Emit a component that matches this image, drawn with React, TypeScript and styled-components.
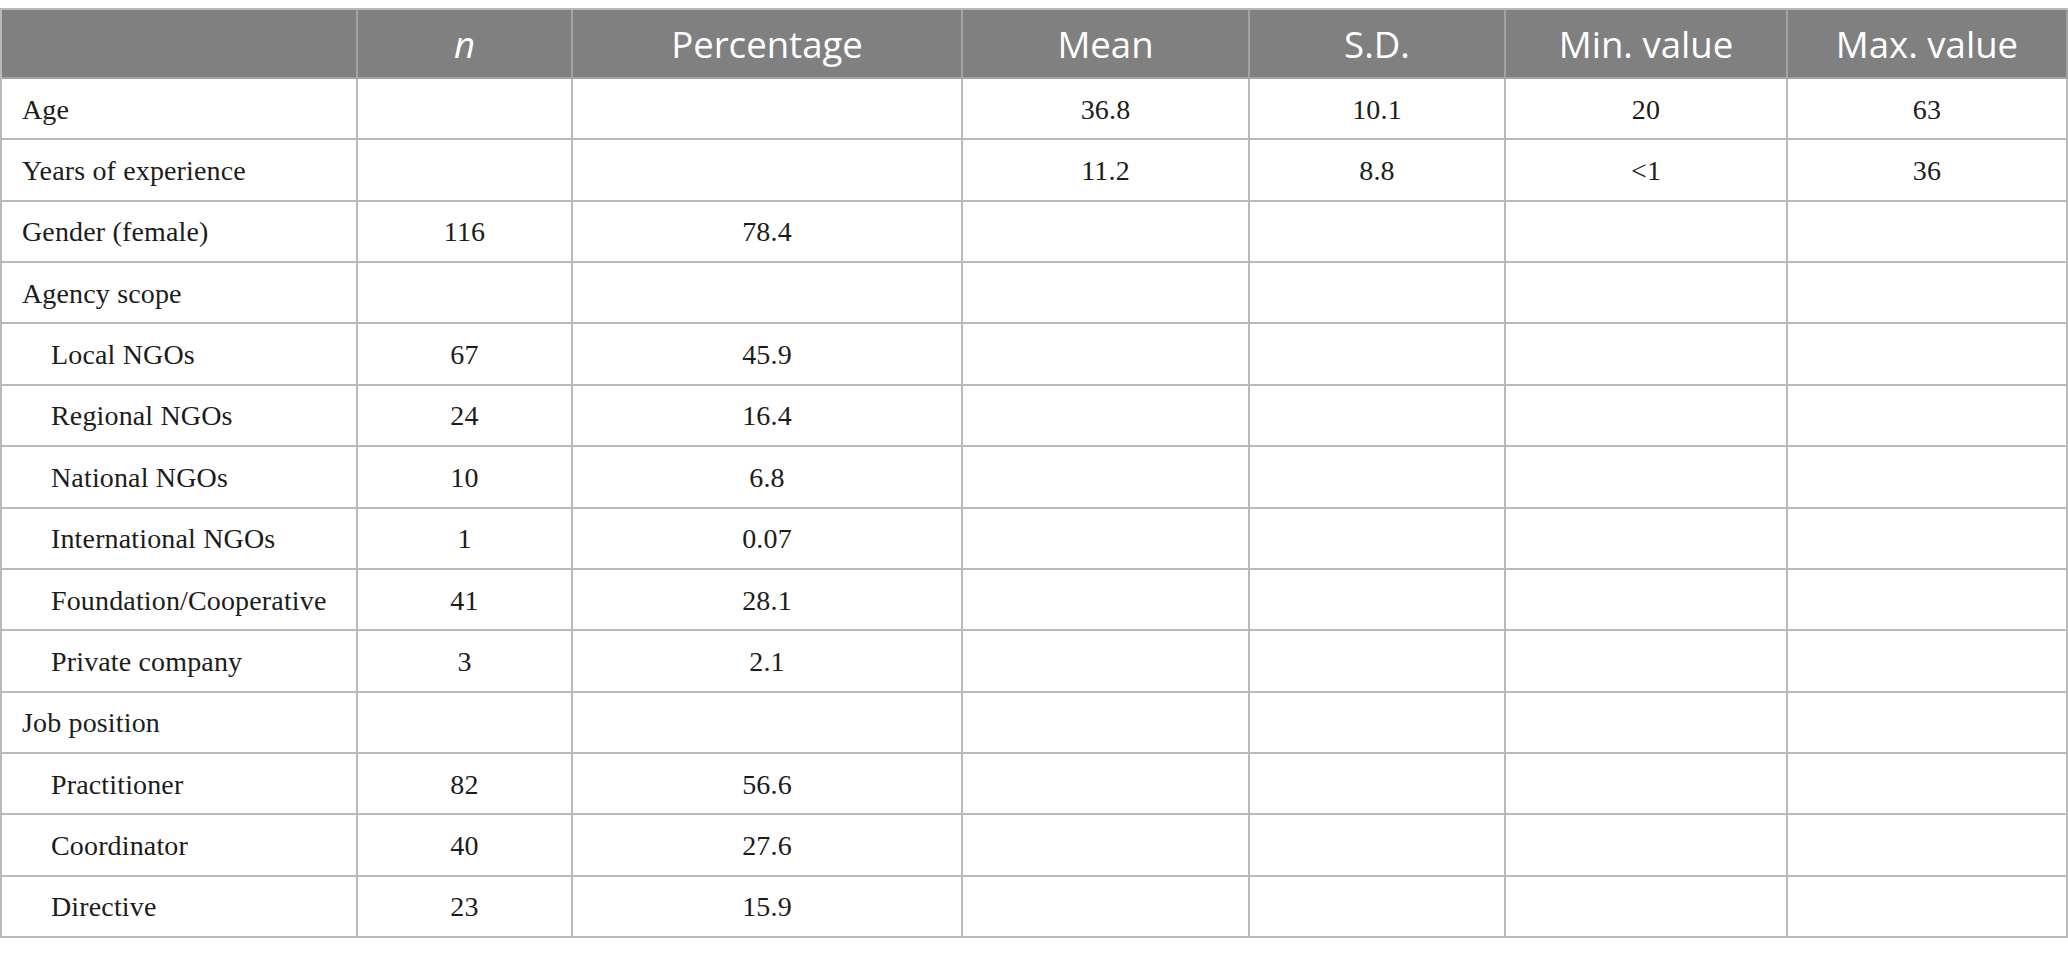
import React from "react";
import styled, { createGlobalStyle } from "styled-components";

const Global = createGlobalStyle`
  html, body { margin: 0; padding: 0; background: #ffffff; }
  body { padding-top: 8px; }
`;

const Grid = styled.div`
  display: grid;
  width: 2068px;
  box-sizing: border-box;
  grid-template-columns: 356px 215px 390px 287px 256px 282px 1fr;
  grid-template-rows: 69px repeat(14, 61.36px);
  border-top: 2px solid #b9b9b9;
  border-left: 2px solid #b9b9b9;
`;

const HeadCell = styled.div<{ $italic?: boolean }>`
  box-sizing: border-box;
  background: #7f807f;
  color: #ffffff;
  font-family: "Open Sans", "DejaVu Sans", sans-serif;
  font-size: 36.6px;
  font-style: ${(p) => (p.$italic ? "italic" : "normal")};
  display: flex;
  align-items: center;
  justify-content: center;
  border-right: 2px solid #a3a3a3;
  border-bottom: 2px solid #a3a3a3;
  padding-top: 1px;
`;

const Cell = styled.div<{ $indent?: number; $center?: boolean }>`
  box-sizing: border-box;
  font-family: "Liberation Serif", "Times New Roman", serif;
  font-size: 28px;
  letter-spacing: 0.15px;
  color: #1c1c1c;
  display: flex;
  align-items: center;
  justify-content: ${(p) => (p.$center ? "center" : "flex-start")};
  padding-left: ${(p) => (p.$center ? 0 : p.$indent ?? 20)}px;
  padding-top: 2px;
  border-right: 2px solid #b9b9b9;
  border-bottom: 2px solid #b9b9b9;
  white-space: nowrap;
`;

type Row = { label: string; sub?: boolean; vals: string[] };

const rows: Row[] = [
  { label: "Age", vals: ["", "", "36.8", "10.1", "20", "63"] },
  { label: "Years of experience", vals: ["", "", "11.2", "8.8", "<1", "36"] },
  { label: "Gender (female)", vals: ["116", "78.4", "", "", "", ""] },
  { label: "Agency scope", vals: ["", "", "", "", "", ""] },
  { label: "Local NGOs", sub: true, vals: ["67", "45.9", "", "", "", ""] },
  { label: "Regional NGOs", sub: true, vals: ["24", "16.4", "", "", "", ""] },
  { label: "National NGOs", sub: true, vals: ["10", "6.8", "", "", "", ""] },
  { label: "International NGOs", sub: true, vals: ["1", "0.07", "", "", "", ""] },
  { label: "Foundation/Cooperative", sub: true, vals: ["41", "28.1", "", "", "", ""] },
  { label: "Private company", sub: true, vals: ["3", "2.1", "", "", "", ""] },
  { label: "Job position", vals: ["", "", "", "", "", ""] },
  { label: "Practitioner", sub: true, vals: ["82", "56.6", "", "", "", ""] },
  { label: "Coordinator", sub: true, vals: ["40", "27.6", "", "", "", ""] },
  { label: "Directive", sub: true, vals: ["23", "15.9", "", "", "", ""] },
];

const headers = ["", "n", "Percentage", "Mean", "S.D.", "Min. value", "Max. value"];

export default function App() {
  return (
    <>
      <Global />
      <Grid>
        {headers.map((h, i) => (
          <HeadCell key={`h${i}`} $italic={h === "n"}>
            {h}
          </HeadCell>
        ))}
        {rows.map((r, ri) => (
          <React.Fragment key={`r${ri}`}>
            <Cell $indent={r.sub ? 49 : 20}>{r.label}</Cell>
            {r.vals.map((v, vi) => (
              <Cell key={`c${ri}-${vi}`} $center>
                {v}
              </Cell>
            ))}
          </React.Fragment>
        ))}
      </Grid>
    </>
  );
}
